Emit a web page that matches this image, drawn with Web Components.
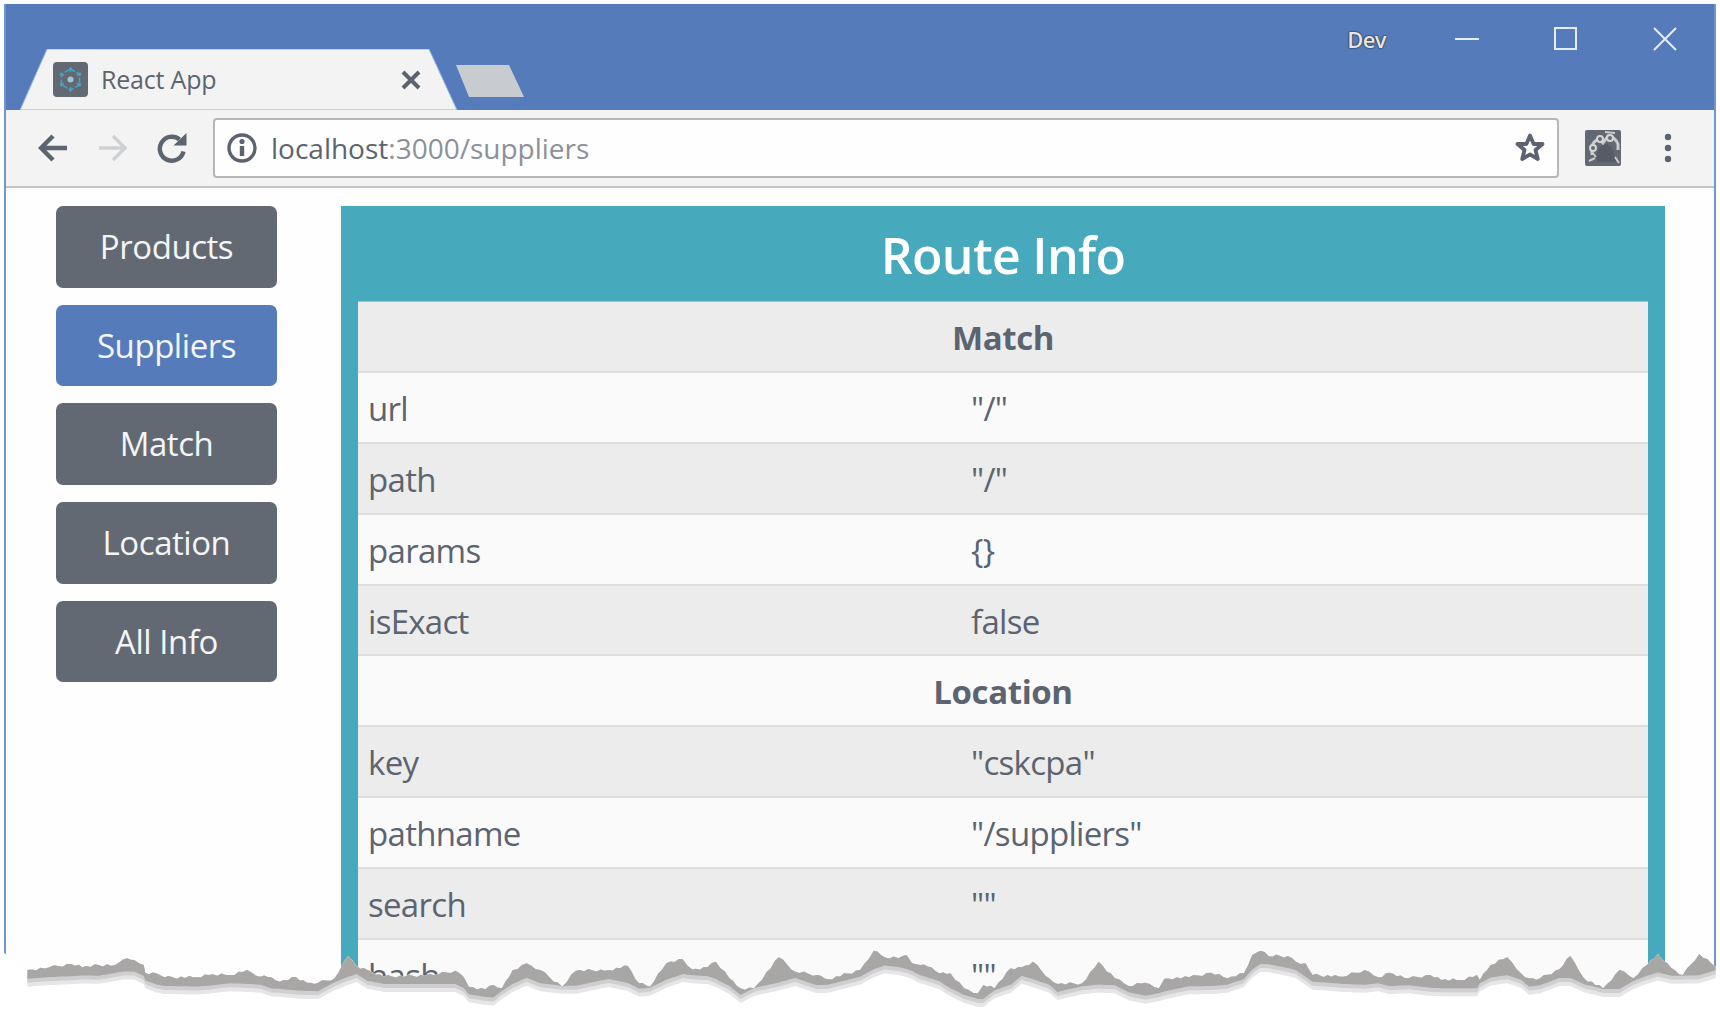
<!DOCTYPE html>
<html>
<head>
<meta charset="utf-8">
<title>React App</title>
<style>
  html, body { margin: 0; height: 100%; background: #fff; overflow: hidden; }
  body { font-family: "Open Sans", "Noto Sans", sans-serif; }
</style>
</head>
<body>
<app-shot>
  <browser-frame>
    <side-nav>
      <nav-button>Products</nav-button>
      <nav-button active>Suppliers</nav-button>
      <nav-button>Match</nav-button>
      <nav-button>Location</nav-button>
      <nav-button>All Info</nav-button>
    </side-nav>
    <route-panel title="Route Info">
      <info-head>Match</info-head>
      <info-row name="url">"/"</info-row>
      <info-row name="path">"/"</info-row>
      <info-row name="params">{}</info-row>
      <info-row name="isExact">false</info-row>
      <info-head>Location</info-head>
      <info-row name="key">"cskcpa"</info-row>
      <info-row name="pathname">"/suppliers"</info-row>
      <info-row name="search">""</info-row>
      <info-row name="hash">""</info-row>
    </route-panel>
  </browser-frame>
  <torn-edge></torn-edge>
</app-shot>

<script>
//Rows of the table are striped by their position, heads included
const stripe = (el) => {
  const index = [...el.parentElement.children].indexOf(el);
  el.style.background = index % 2 === 0 ? "#ececed" : "#fafafa";
};

class AppShot extends HTMLElement {
  constructor() {
    super();
    this._root = this.attachShadow({ mode: "open" });
    this._root.innerHTML = `
    <style>
      :host { display: block; position: relative; width: 1720px; height: 1010px; overflow: hidden; background: #fff; }
    </style>
    <slot></slot>`;
  }
}
customElements.define("app-shot", AppShot);

//Window chrome: title bar, tab, toolbar, then the page in a slot
class BrowserFrame extends HTMLElement {
  constructor() {
    super();
    this._root = this.attachShadow({ mode: "open" });
    this._root.innerHTML = `
    <style>
      :host {
        display: flex; flex-direction: column;
        margin: 4px 4px 0 4px; height: 1006px;
        border-left: 2px solid #6f97cf; border-right: 2px solid #6f97cf;
        box-sizing: border-box;
        color: #5b6470;
      }
      .title { height: 106px; background: #557bbb; display: flex; align-items: flex-end; position: relative; flex: none; }
      .tab { width: 445px; height: 61px; margin-left: 13px; flex: none; position: relative; }
      .tab svg.shape { position: absolute; inset: 0; }
      .tabInner { position: relative; height: 100%; display: flex; align-items: center; padding: 0 0 0 34px; box-sizing: border-box; }
      .favicon { width: 35px; height: 35px; flex: none; }
      .tabText { font-size: 25px; margin-left: 13px; width: 301px; letter-spacing: -0.2px; color: #5b6470; white-space: nowrap; margin-top: -1px; }
      .close { flex: none; margin-left: -1px; }
      .newTab { margin: 0 0 13px -8px; flex: none; display: block; }
      .controls { margin-left: auto; align-self: flex-start; display: flex; align-items: center; height: 28px; margin-top: 21px; padding-right: 37px; }
      .dev { font-size: 22px; font-weight: 600; color: #e6e6e6; letter-spacing: -0.6px; margin-right: 69px; text-shadow: 0 0 2px #222, 0 0 1px #222; }
      .controls svg { display: block; }
      .bar { height: 78px; box-sizing: border-box; background: #f3f3f3; border-bottom: 2px solid #c4c4c6; display: flex; align-items: center; flex: none; }
      .nav { display: flex; align-items: center; width: 207px; padding-left: 32px; box-sizing: border-box; flex: none; gap: 29px; }
      .omni {
        width: 1346px; height: 60px; margin-top: -1px; flex: none; box-sizing: border-box;
        background: #fefefe; border: 2px solid #b5b5b7; border-radius: 4px;
        display: flex; align-items: center; padding: 0 11px 0 12px;
      }
      .url { font-size: 28px; margin-left: 14px; letter-spacing: 0; color: #8d9197; white-space: nowrap; }
      .url b { font-weight: 400; color: #5b6470; }
      .ext { margin-left: 26px; flex: none; }
      .dots { margin-left: 42px; flex: none; }
      .page { flex: 1; min-height: 0; display: flex; align-items: flex-start; background: #fefefe; padding-top: 18px; }
    </style>
    <div class="title">
      <div class="tab">
        <svg class="shape" width="445" height="61" viewBox="0 0 445 61">
          <path d="M1 61 L28 0 L410 0 L438 61 Z" fill="#f3f3f3" stroke="#8fb0dc" stroke-width="1"/>
        </svg>
        <div class="tabInner">
          <svg class="favicon" viewBox="0 0 35 35">
            <rect width="35" height="35" rx="4" fill="#636972"/>
            <g fill="none" stroke="#3fa6c4" stroke-width="1.5">
              <path d="M17.5 7L26.5 12.2V22.8L17.5 28L8.5 22.8V12.2Z" stroke-dasharray="5 2"/>
              <path d="M17.5 7V28M8.5 12.2L26.5 22.8M26.5 12.2L8.5 22.8" stroke-dasharray="3 6"/>
            </g>
            <circle cx="17.5" cy="17.5" r="3" fill="#9fc4d6"/>
            <g fill="#3fa6c4">
              <circle cx="17.5" cy="7" r="1.7"/><circle cx="26.5" cy="12.2" r="1.7"/><circle cx="26.5" cy="22.8" r="1.7"/>
              <circle cx="17.5" cy="28" r="1.7"/><circle cx="8.5" cy="22.8" r="1.7"/><circle cx="8.5" cy="12.2" r="1.7"/>
            </g>
          </svg>
          <span class="tabText">React App</span>
          <svg class="close" width="20" height="20" viewBox="0 0 20 20">
            <path d="M2 2L18 18M18 2L2 18" stroke="#5b6470" stroke-width="4"/>
          </svg>
        </div>
      </div>
      <svg class="newTab" width="70" height="32" viewBox="0 0 70 32"><path d="M0 0H53L68 32H13Z" fill="#c8ccd0"/></svg>
      <div class="controls">
        <span class="dev">Dev</span>
        <svg width="24" height="24" viewBox="0 0 24 24"><path d="M0 12H24" stroke="#e6ecf5" stroke-width="2"/></svg>
        <svg width="24" height="24" viewBox="0 0 24 24" style="margin-left:75px"><rect x="1" y="1" width="21" height="21" fill="none" stroke="#e6ecf5" stroke-width="2"/></svg>
        <svg width="24" height="24" viewBox="0 0 24 24" style="margin-left:75px"><path d="M1 1L23 23M23 1L1 23" stroke="#e6ecf5" stroke-width="2"/></svg>
      </div>
    </div>
    <div class="bar">
      <div class="nav">
        <svg width="30" height="30" viewBox="0 0 30 30"><path d="M29 15H4M15 3L3 15L15 27" fill="none" stroke="#5b6470" stroke-width="4.4"/></svg>
        <svg width="30" height="30" viewBox="0 0 30 30" style="margin-left:1px"><path d="M1 15H26M15 3L27 15L15 27" fill="none" stroke="#ced1d4" stroke-width="3.4"/></svg>
        <svg width="30" height="30" viewBox="0 0 30 30"><path d="M26.5 18.5A12 12 0 1 1 22.5 6.5" fill="none" stroke="#5b6470" stroke-width="4.4"/><path d="M16.5 12.5H29.5V0Z" fill="#5b6470"/></svg>
      </div>
      <div class="omni">
        <svg width="30" height="30" viewBox="0 0 30 30" style="flex:none"><circle cx="15" cy="15" r="13" fill="none" stroke="#5b6470" stroke-width="3.4"/><path d="M15 13V23" stroke="#5b6470" stroke-width="4.4"/><circle cx="15" cy="8.5" r="2.6" fill="#5b6470"/></svg>
        <span class="url"><b>localhost</b>:3000/suppliers</span>
        <svg width="32" height="31" viewBox="0 0 32 31" style="margin-left:auto;flex:none"><path d="M16 3.5L19.6 12H28.5L21.5 18L23.8 27L16 22.3L8.2 27L10.5 18L3.5 12H12.4Z" fill="none" stroke="#5b6470" stroke-width="3.8" stroke-linejoin="round"/></svg>
      </div>
      <svg class="ext" width="36" height="36" viewBox="0 0 36 36">
        <rect width="36" height="36" rx="2" fill="#636972"/>
        <path d="M7 25V17Q8 11 14 9L18 13L23 6Q30 7 33 14V20" fill="none" stroke="#c9cbce" stroke-width="3"/>
        <path d="M11 27Q13 15 21 14Q28 15 29 25L31 32H12Z" fill="#565c65"/>
        <circle cx="8" cy="18" r="3" fill="#636972" stroke="#d4d6d8" stroke-width="2"/>
        <circle cx="15" cy="9" r="3" fill="#636972" stroke="#d4d6d8" stroke-width="2"/>
        <circle cx="25" cy="8" r="3" fill="#636972" stroke="#d4d6d8" stroke-width="2"/>
        <path d="M4 31L10 28M7 22L11 27M30 27L34 33M20 2L30 3" stroke="#c9cbce" stroke-width="2"/>
      </svg>
      <svg class="dots" width="10" height="32" viewBox="0 0 10 32"><circle cx="5" cy="5" r="3.2" fill="#5b6470"/><circle cx="5" cy="16" r="3.2" fill="#5b6470"/><circle cx="5" cy="27" r="3.2" fill="#5b6470"/></svg>
    </div>
    <div class="page"><slot></slot></div>`;
  }
}
customElements.define("browser-frame", BrowserFrame);

class SideNav extends HTMLElement {
  constructor() {
    super();
    this._root = this.attachShadow({ mode: "open" });
    this._root.innerHTML = `
    <style>
      :host { display: flex; flex-direction: column; gap: 17px; width: 221px; margin-left: 50px; flex: none; }
    </style>
    <slot></slot>`;
  }
}
customElements.define("side-nav", SideNav);

class NavButton extends HTMLElement {
  constructor() {
    super();
    this._root = this.attachShadow({ mode: "open" });
    this._root.innerHTML = `
    <style>
      :host {
        display: flex; align-items: center; justify-content: center;
        height: 81.7px; border-radius: 7px; box-sizing: border-box; padding-bottom: 1px;
        background: #636972; color: #f4f5f6;
        font-size: 33px; letter-spacing: -0.45px;
      }
      :host([active]) { background: #557bbb; }
    </style>
    <slot></slot>`;
  }
}
customElements.define("nav-button", NavButton);

class RoutePanel extends HTMLElement {
  constructor() {
    super();
    this._root = this.attachShadow({ mode: "open" });
    this._root.innerHTML = `
    <style>
      :host { display: block; width: 1324px; margin-left: 64px; flex: none; background: #47a9bc; padding: 0 17px; box-sizing: border-box; }
      h3 { margin: 0; height: 95px; line-height: 99px; text-align: center; color: #fff; font-size: 50px; font-weight: 600; letter-spacing: -0.7px; }
      .rows { display: block; border-top: 1px solid #8fc9d6; }
    </style>
    <h3></h3>
    <div class="rows"><slot></slot></div>`;
    this._root.querySelector("h3").textContent = this.getAttribute("title");
  }
}
customElements.define("route-panel", RoutePanel);

class InfoHead extends HTMLElement {
  constructor() {
    super();
    this._root = this.attachShadow({ mode: "open" });
    this._root.innerHTML = `
    <style>
      :host {
        display: flex; align-items: center; justify-content: center;
        height: 70.9px; box-sizing: border-box; border-bottom: 2px solid #dcdfe2; padding-top: 2px;
        font-size: 33px; font-weight: 700; letter-spacing: -0.4px; color: #5b6470;
      }
    </style>
    <slot></slot>`;
  }
  connectedCallback() {
    stripe(this);
  }
}
customElements.define("info-head", InfoHead);

class InfoRow extends HTMLElement {
  constructor() {
    super();
    this._root = this.attachShadow({ mode: "open" });
    this._root.innerHTML = `
    <style>
      :host {
        display: grid; grid-template-columns: 602px 1fr; align-items: center;
        height: 70.9px; box-sizing: border-box; border-bottom: 2px solid #dcdfe2; padding-top: 2px;
        font-size: 33px; letter-spacing: -0.7px; color: #5b6470;
      }
      .name { padding-left: 10px; }
      .value { padding-left: 11px; }
    </style>
    <span class="name"></span><span class="value"><slot></slot></span>`;
    this._root.querySelector(".name").textContent = this.getAttribute("name");
  }
  connectedCallback() {
    stripe(this);
  }
}
customElements.define("info-row", InfoRow);

//Torn paper edge at the bottom of the picture
class TornEdge extends HTMLElement {
  constructor() {
    super();
    this._root = this.attachShadow({ mode: "open" });
    this._root.innerHTML = `
    <style>
      :host { position: absolute; left: 0; top: 0; width: 1720px; height: 1010px; pointer-events: none; }
      svg { display: block; }
    </style>
    <svg width="1720" height="1010" viewBox="0 0 1720 1010"></svg>`;
  }
  connectedCallback() {
    const left = [[50,270],[90,262],[130,252],[150,262],[180,255],[210,255],[225,238],[245,240],[262,255],[265,278],[285,280],[300,292],[360,292],[380,285],[420,285],[450,270],[475,290],[495,292],[510,305],[540,292],[560,308],[580,308],[610,295],[635,228],[650,258],[670,270],[700,290],[790,285],[830,272],[845,290],[855,320],[885,328],[900,315],[915,325],[935,270],[960,250],[985,270],[1025,320],[1050,272],[1110,270],[1145,258],[1165,310],[1185,320],[1215,250],[1245,238],[1262,268],[1290,262],[1305,245],[1330,295],[1350,325],[1375,325],[1420,232],[1450,275],[1490,285],[1510,298],[1568,270]];
    const right = [[25,212],[45,232],[70,235],[85,225],[95,250],[110,255],[130,262],[145,280],[165,280],[190,325],[215,340],[225,315],[245,325],[275,265],[295,262],[315,245],[345,295],[360,312],[405,310],[435,245],[465,295],[490,318],[520,308],[545,325],[555,296],[600,292],[640,278],[670,295],[700,280],[715,225],[730,212],[745,228],[780,228],[795,245],[812,250],[825,285],[880,290],[920,270],[945,292],[965,278],[1000,295],[1040,285],[1060,300],[1095,300],[1125,285],[1130,300],[1150,255],[1180,232],[1205,280],[1220,295],[1240,295],[1275,268],[1295,228],[1320,295],[1355,325],[1385,270],[1410,295],[1435,255],[1455,222],[1480,265],[1500,285],[1530,222],[1560,260]];
    const scale = 860 / 1568;
    const coarse = left.map(([x, y]) => [x * scale, 880 + y / 3])
      .concat(right.map(([x, y]) => [860 + x * scale, 880 + y / 3]));
    //The lower edge of the shadow is a rounded version of the top edge
    const smooth = coarse.map((p, i) => {
      const near = coarse.slice(Math.max(0, i - 1), i + 2);
      return near.reduce((sum, q) => sum + q[1], 0) / near.length;
    });
    //Split each segment so the top edge gets small teeth
    const pts = [];
    const lowY = [];
    coarse.forEach((p, i) => {
      const q = coarse[i + 1];
      if (!q) {
        pts.push(p);
        lowY.push(smooth[i]);
        return;
      }
      const steps = Math.max(1, Math.round((q[0] - p[0]) / 4));
      for (let s = 0; s < steps; s++) {
        const t = s / steps;
        const tooth = s === 0 ? 0 : ((s * 7 + i * 3) % 5) * 0.7 - 1.4;
        pts.push([p[0] + (q[0] - p[0]) * t, p[1] + (q[1] - p[1]) * t + tooth]);
        lowY.push(smooth[i] + (smooth[i + 1] - smooth[i]) * t);
      }
    });
    const line = (a) => a.map((p) => p[0].toFixed(1) + " " + p[1].toFixed(1)).join(" L");
    const band = (offset, colour) => {
      const lower = pts.map((p, i) => [p[0], Math.max(p[1], lowY[i] + offset)]).reverse();
      return `<path d="M${line(pts)} L${line(lower)} Z" fill="${colour}"/>`;
    };
    const white = `<path d="M0 950 L${line(pts)} L1720 966 L1720 1010 L0 1010 Z" fill="#fff"/>`;
    this._root.querySelector("svg").innerHTML = white + band(18, "#e6e6e9") + band(14, "#cfcfd2") + band(10, "#a9a6a6");
  }
}
customElements.define("torn-edge", TornEdge);
</script>
</body>
</html>
